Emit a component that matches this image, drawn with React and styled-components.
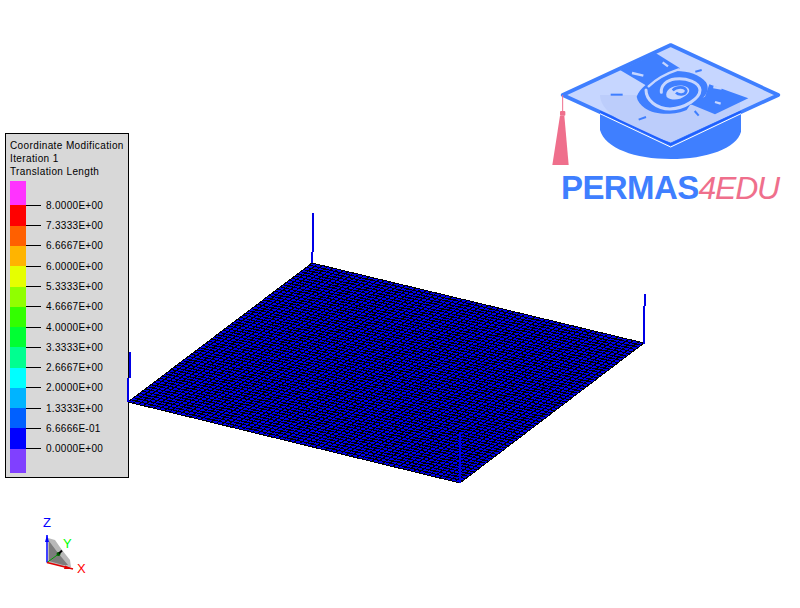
import React from "react";
import styled, { createGlobalStyle } from "styled-components";

const swatches = [
  { color: "#ff33ff", h: 24 },
  { color: "#ff0000", h: 21 },
  { color: "#ff6000", h: 20 },
  { color: "#ffb400", h: 20 },
  { color: "#e6ff00", h: 21 },
  { color: "#90ff00", h: 20 },
  { color: "#33ff00", h: 20 },
  { color: "#00ff33", h: 20 },
  { color: "#00ff90", h: 21 },
  { color: "#00ffff", h: 20 },
  { color: "#00b4ff", h: 20 },
  { color: "#0060ff", h: 20 },
  { color: "#0000ff", h: 21 },
  { color: "#8040ff", h: 24 },
];

const ticks = [
  { label: "8.0000E+00", h: 20 },
  { label: "7.3333E+00", h: 20 },
  { label: "6.6667E+00", h: 21 },
  { label: "6.0000E+00", h: 20 },
  { label: "5.3333E+00", h: 20 },
  { label: "4.6667E+00", h: 21 },
  { label: "4.0000E+00", h: 20 },
  { label: "3.3333E+00", h: 20 },
  { label: "2.6667E+00", h: 20 },
  { label: "2.0000E+00", h: 21 },
  { label: "1.3333E+00", h: 20 },
  { label: "6.6666E-01", h: 20 },
  { label: "0.0000E+00", h: 20 },
];

// plate corners in screen pixels
const TOP = [312, 263];
const RIGHT = [644, 343];
const LEFT = [128, 402];
const BOTTOM = [460, 483];
const CELLS = 64;

const mix = (a, b, t) => [a[0] + (b[0] - a[0]) * t, a[1] + (b[1] - a[1]) * t];

const meshLines = () => {
  const lines = [];
  for (let i = 0; i <= CELLS; i++) {
    const t = i / CELLS;
    lines.push([mix(TOP, LEFT, t), mix(RIGHT, BOTTOM, t)]);
    lines.push([mix(TOP, RIGHT, t), mix(LEFT, BOTTOM, t)]);
  }
  return lines;
};

const stems = [
  [313, 213, 252],
  [312, 252, 263],
  [645, 294, 306],
  [644, 306, 344],
  [460, 433, 483],
  [129.5, 352, 378],
  [127.5, 378, 402],
];

const Global = createGlobalStyle`
  html, body {
    margin: 0;
    background: #fff;
    overflow: hidden;
  }
`;

const Viewport = styled.div`
  position: relative;
  width: 800px;
  height: 608px;
  background: #fff;
  font-family: "Liberation Sans", Arial, sans-serif;
`;

const Legend = styled.div`
  position: absolute;
  left: 5px;
  top: 133px;
  width: 122px;
  height: 343px;
  border: 1px solid #000;
  background: #d8d8d8;
  color: #000;
  font-size: 10px;
`;

const Title = styled.div`
  padding: 5px 0 0 4px;
  height: 42px;
  line-height: 13px;
  letter-spacing: 0.38px;
  white-space: nowrap;
`;

const Scale = styled.div`
  display: flex;
  padding-left: 4px;
`;

const ColorBar = styled.div`
  display: flex;
  flex-direction: column;
  width: 16px;
`;

const Swatch = styled.div`
  height: ${(p) => p.$h}px;
  background: ${(p) => p.$color};
`;

const TickList = styled.div`
  padding-top: 18px;
`;

const Tick = styled.div`
  display: flex;
  align-items: flex-start;
  height: ${(p) => p.$h}px;
  line-height: 13px;
  letter-spacing: 0.3px;
  white-space: nowrap;

  &::before {
    content: "";
    width: 15px;
    height: 1px;
    margin: 6px 5px 0 0;
    background: #000;
  }
`;

const Scene = styled.svg`
  position: absolute;
  inset: 0;
  pointer-events: none;
`;

const Logo = styled.div`
  position: absolute;
  left: 540px;
  top: 35px;
  width: 250px;
`;

const CapArt = styled.svg`
  display: block;
  width: 250px;
  height: 136px;
`;

const Wordmark = styled.div`
  display: flex;
  align-items: baseline;
  padding-left: 21px;
  height: 34px;
  line-height: 34px;
`;

const Permas = styled.span`
  color: #3f7fff;
  font-weight: 700;
  font-size: 33px;
  letter-spacing: -0.6px;
`;

const Edu = styled.span`
  color: #ef6f8c;
  font-style: italic;
  font-size: 32px;
  letter-spacing: -1.3px;
`;

const Triad = styled.svg`
  position: absolute;
  left: 25px;
  top: 510px;
`;

const AxisLabel = styled.text`
  font-family: "Liberation Sans", Arial, sans-serif;
  font-size: 13px;
  fill: ${(p) => p.$color};
`;

const BLUE = "#3f7fff";
const PALE = "#c6d6ff";

const CapLogo = () => (
  <CapArt viewBox="0 0 750 408">
    {/* cylinder under the brim */}
    <path
      d="M180 230 L392 330 L603 230 L603 290 C590 340 500 372 392 372 C285 372 195 340 180 285 Z"
      fill={BLUE}
    />
    <polygon
      points="68,180 392,30 715,180 392,328"
      fill={PALE}
      stroke={BLUE}
      strokeWidth="11"
      strokeLinejoin="round"
    />
    <path d="M180 180 C180 240 290 290 392 322 L600 225 L600 180 Z" fill="#bccdfb" />
    <path d="M180 236 L392 336 L603 236" fill="none" stroke="#fff" strokeWidth="3" />
    <path d="M180 230 L392 328 L603 230" fill="none" stroke="#1f5fff" strokeWidth="6" />

    {/* dark bands and swirl, drawn around the swirl's own corner */}
    <g transform="translate(240 30)">
      <polygon points="0,75 108,25 180,70 85,125" fill={BLUE} />
      <polygon points="205,175 255,155 268,118 385,160 285,208" fill={BLUE} />
      <path
        d="M50 155 C60 130 85 110 130 85 C165 70 235 80 258 112 C272 135 258 165 210 180 L200 195 C170 210 105 212 75 190 C62 180 52 168 50 155 Z"
        fill={BLUE}
      />
      <g fill="none" stroke={PALE} strokeLinecap="round">
        <path d="M86 124 C105 105 140 85 176 73" strokeWidth="7" />
        <path d="M78 135 C78 165 110 192 150 192 C195 190 240 160 240 135 C238 112 200 98 165 102 C140 105 122 122 124 142" strokeWidth="9" />
      </g>
      <path
        d="M140 156 C132 132 165 118 190 122 C212 126 214 142 194 154 C180 165 155 168 140 156 Z"
        fill={PALE}
      />
      <path d="M158 136 C170 124 196 124 199 138 C196 151 176 151 168 143" fill="none" stroke={BLUE} strokeWidth="8" />

      {/* small marks */}
      <g fill="none" stroke={PALE} strokeWidth="7">
        <path d="M36 84 L70 92" />
        <path d="M128 52 L144 64" />
        <path d="M280 126 L305 131" />
        <path d="M285 171 L302 176" />
      </g>
      <g fill="none" stroke={BLUE} strokeWidth="6">
        <path d="M-28 149 L8 149" />
        <path d="M226 80 L245 75" />
        <path d="M224 198 L236 212" />
        <path d="M56 224 L78 216" />
      </g>
    </g>

    {/* tassel */}
    <path d="M68 180 L68 230" stroke="#ef6f8c" strokeWidth="3" />
    <rect x="60" y="228" width="16" height="14" rx="3" fill="#ef6f8c" />
    <polygon points="60,242 73,242 86,390 37,390" fill="#ef6f8c" />
  </CapArt>
);

const AxisTriad = () => (
  <Triad width="70" height="70" viewBox="0 0 70 70">
    <polygon points="23,52 23,28 30,30 37,40 45,50 46,57 38,57" fill="#b8b8b8" />
    <polygon points="24,51 24,31 33,43 43,55 38,55" fill="#7c7c7c" />
    <path d="M22 52.5 L22 25" stroke="#0000ff" strokeWidth="1.5" />
    <polygon points="20,32 24,32 22,25" fill="#0000ff" />
    <path d="M22 52.5 L35 43" stroke="#00a000" strokeWidth="1" />
    <circle cx="33.5" cy="44" r="2" fill="#006000" />
    <path d="M34 43.5 L37 40.5" stroke="#000" strokeWidth="2" />
    <path d="M22 52.5 L48 59" stroke="#e00000" strokeWidth="1.5" />
    <polygon points="40,55.5 48,59 39,59" fill="#e00000" />
    <AxisLabel x="18" y="17" $color="#0000ff">Z</AxisLabel>
    <AxisLabel x="38" y="38" $color="#00ff00">Y</AxisLabel>
    <AxisLabel x="52" y="63" $color="#ff0000">X</AxisLabel>
  </Triad>
);

export default function App() {
  const lines = meshLines();
  return (
    <Viewport>
      <Global />
      <Legend>
        <Title>
          Coordinate Modification
          <br />
          Iteration 1
          <br />
          Translation Length
        </Title>
        <Scale>
          <ColorBar>
            {swatches.map((s) => (
              <Swatch key={s.color} $color={s.color} $h={s.h} />
            ))}
          </ColorBar>
          <TickList>
            {ticks.map((t) => (
              <Tick key={t.label} $h={t.h}>
                {t.label}
              </Tick>
            ))}
          </TickList>
        </Scale>
      </Legend>

      <Scene width="800" height="608" shapeRendering="crispEdges">
        <polygon
          points={[TOP, RIGHT, BOTTOM, LEFT].map((p) => p.join(",")).join(" ")}
          fill="#0000ee"
        />
        {lines.map(([a, b], i) => (
          <line key={i} x1={a[0]} y1={a[1]} x2={b[0]} y2={b[1]} stroke="#000" strokeWidth="1" />
        ))}
        {stems.map(([x, y1, y2]) => (
          <line key={y1} x1={x} y1={y1} x2={x} y2={y2} stroke="#0000e6" strokeWidth="2" />
        ))}
      </Scene>

      <Logo>
        <CapLogo />
        <Wordmark>
          <Permas>PERMAS</Permas>
          <Edu>4EDU</Edu>
        </Wordmark>
      </Logo>

      <AxisTriad />
    </Viewport>
  );
}
